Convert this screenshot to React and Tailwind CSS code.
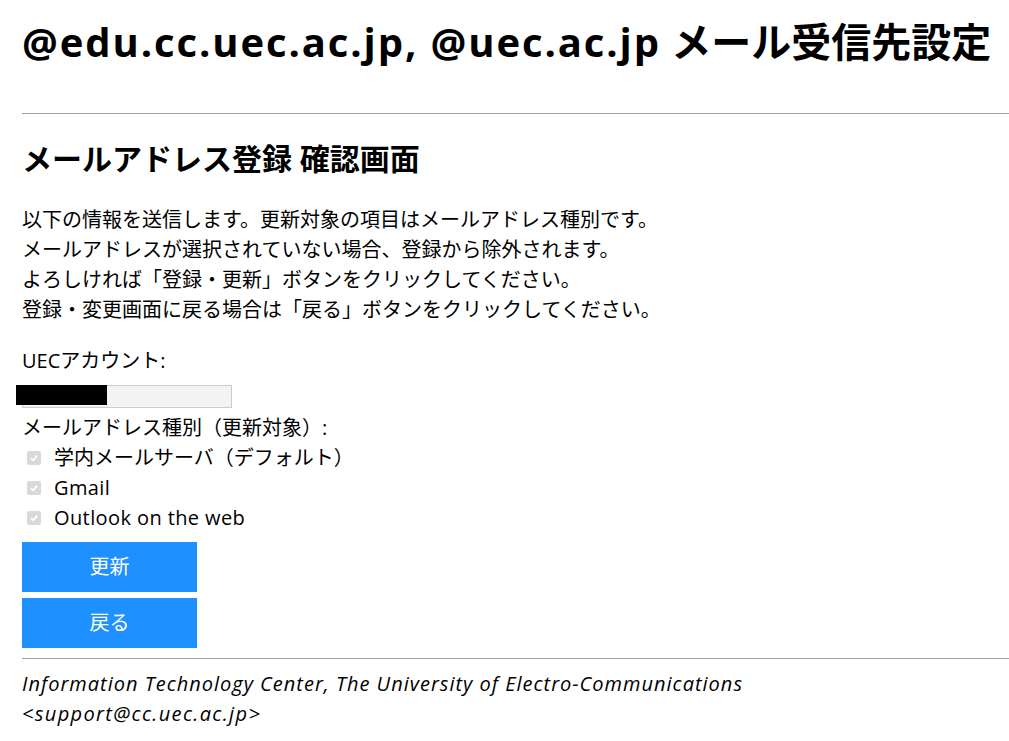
import React from "react";

const font = { fontFamily: '"Open Sans", "Noto Sans CJK JP", sans-serif' };

function Check({ label, track = "" }) {
  return (
    <div className="flex items-center h-[30px]">
      <div className="ml-[5px] w-[14px] h-[14px] rounded-[2px] bg-[#d9d9d9] flex items-center justify-center">
        <svg width="10" height="10" viewBox="0 0 10 10">
          <path d="M2 5.2 L4.2 7.3 L8.2 2.6" fill="none" stroke="#fff" strokeWidth="1.8" />
        </svg>
      </div>
      <span className={"ml-[13px] " + track}>{label}</span>
    </div>
  );
}

export default function App() {
  return (
    <div
      className="bg-white text-black text-[20px] leading-[30px] pl-[22px] w-[1009px] h-[741px] overflow-hidden"
      style={font}
    >
      <h1 className="pt-[12px] h-[72px] text-[40px] leading-[60px] font-bold whitespace-nowrap">
        <span className="tracking-[1.9px]">@edu.cc.uec.ac.jp, @uec.ac.jp</span> メール受信先設定
      </h1>
      <div className="mt-[41px] h-px bg-[#a0a0a0]" />
      <h2 className="mt-[22px] text-[30px] leading-[45px] font-bold">
        メールアドレス登録 確認画面
      </h2>
      <div className="mt-[24px]">
        <div>以下の情報を送信します。更新対象の項目はメールアドレス種別です。</div>
        <div>メールアドレスが選択されていない場合、登録から除外されます。</div>
        <div>よろしければ「登録・更新」ボタンをクリックしてください。</div>
        <div>登録・変更画面に戻る場合は「戻る」ボタンをクリックしてください。</div>
      </div>
      <div className="mt-[21px]">UECアカウント:</div>
      <div className="relative mt-[9px] w-[210px] h-[23px] bg-[#f3f3f3] border border-[#cccccc]">
        <div className="absolute left-[-7px] top-[-1px] w-[91px] h-[20px] bg-black" />
      </div>
      <div className="mt-[5px]">メールアドレス種別（更新対象）:</div>
      <Check label="学内メールサーバ（デフォルト）" />
      <Check label="Gmail" track="tracking-[0.4px]" />
      <Check label="Outlook on the web" track="tracking-[0.4px]" />
      <button className="block mt-[9px] w-[175px] h-[50px] bg-[#1e90ff] text-white text-[20px]">
        更新
      </button>
      <button className="block mt-[6px] w-[175px] h-[50px] bg-[#1e90ff] text-white text-[20px]">
        戻る
      </button>
      <div className="mt-[10px] h-px bg-[#a0a0a0]" />
      <div className="mt-[10px] italic">
        <div className="tracking-[1px]">
          Information Technology Center, The University of Electro-Communications
        </div>
        <div className="tracking-[1.35px]">&lt;support@cc.uec.ac.jp&gt;</div>
      </div>
    </div>
  );
}
